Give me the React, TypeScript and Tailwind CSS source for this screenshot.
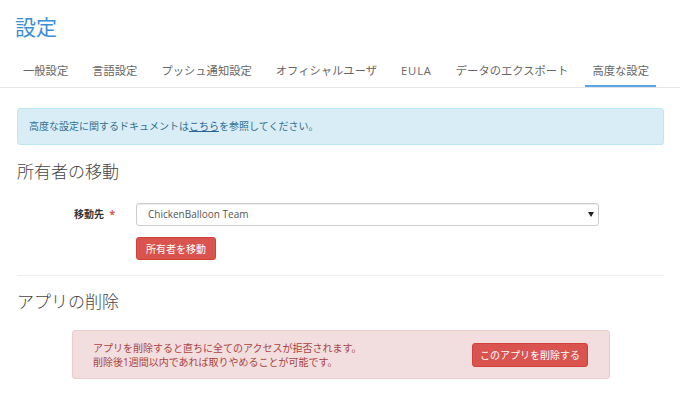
const font = { fontFamily: '"Open Sans", "Noto Sans CJK JP", sans-serif' };

const tabs = ['一般設定', '言語設定', 'プッシュ通知設定', 'オフィシャルユーザ', 'EULA', 'データのエクスポート', '高度な設定'];

function Tab({ label, active }: { label: string; active?: boolean }) {
  return (
    <div
      className={
        'h-[31px] px-[7px] flex items-center text-[11.3px] text-[#666] ' +
        (label === 'EULA' ? 'tracking-[0.8px] ' : '') +
        (active ? 'border-b-2 border-[#5aa5e6] -mb-px pt-[2px]' : '')
      }
    >
      {label}
    </div>
  );
}

function DangerButton({ children, className }: { children: React.ReactNode; className?: string }) {
  return (
    <button
      type="button"
      className={
        'flex items-center justify-center bg-[#d9534f] border border-[#d43f3a] rounded-[3px] text-white text-[10px] leading-[14px] ' +
        (className ?? '')
      }
    >
      {children}
    </button>
  );
}

export default function App() {
  return (
    <div className="w-[680px] h-[406px] bg-white overflow-hidden" style={font}>
      <h1 className="pt-[14px] pl-[15px] text-[21px] leading-[26px] text-[#3a8ed4]">設定</h1>

      <nav className="mt-[16px] flex gap-[10px] pl-[16px] border-b border-[#e5e5e5]">
        {tabs.map((t) => (
          <Tab key={t} label={t} active={t === '高度な設定'} />
        ))}
      </nav>

      <div className="pl-[17px] pr-[16px]">
        <div className="mt-[20px] bg-[#d9edf7] border border-[#bce8f1] rounded-[3px] px-[11px] py-[10px] text-[10px] leading-[15px] text-[#31708f]">
          高度な設定に関するドキュメントは<a className="underline text-[#2a6496]">こちら</a>を参照してください。
        </div>

        <h2 className="mt-[15px] text-[17px] leading-[24px] text-[#444] font-light">所有者の移動</h2>

        <div className="mt-[19px] flex items-center">
          <div className="w-[119px] pr-[21px] text-right text-[10px] font-bold text-[#333]">
            移動先 <span className="text-[#d9534f] ml-[3px]">*</span>
          </div>
          <div className="w-[463px] h-[23px] border border-[#ccc] rounded-[3px] shadow-[inset_0_1px_1px_rgba(0,0,0,0.075)] flex items-center justify-between pl-[11px] pr-[4px] text-[10px] text-[#555]">
            <span>ChickenBalloon Team</span>
            <svg width="6" height="5" viewBox="0 0 6 5">
              <path d="M0 0h6L3 5z" fill="#222" />
            </svg>
          </div>
        </div>

        <div className="mt-[11px] pl-[119px] flex">
          <DangerButton className="h-[23px] px-[9px]">所有者を移動</DangerButton>
        </div>

        <div className="mt-[15px] border-t border-[#eee]" />

        <h2 className="mt-[14px] text-[17px] leading-[24px] text-[#444] font-light">アプリの削除</h2>

        <div className="mt-[16px] ml-[55px] w-[538px] bg-[#f2dede] border border-[#ebccd1] rounded-[3px] pl-[20px] pr-[21px] pt-[10px] pb-[9px] flex items-center justify-between">
          <div className="text-[10px] leading-[14px] text-[#a94442]">
            <div>アプリを削除すると直ちに全てのアクセスが拒否されます。</div>
            <div>削除後1週間以内であれば取りやめることが可能です。</div>
          </div>
          <DangerButton className="h-[24px] w-[116px]">このアプリを削除する</DangerButton>
        </div>
      </div>
    </div>
  );
}
